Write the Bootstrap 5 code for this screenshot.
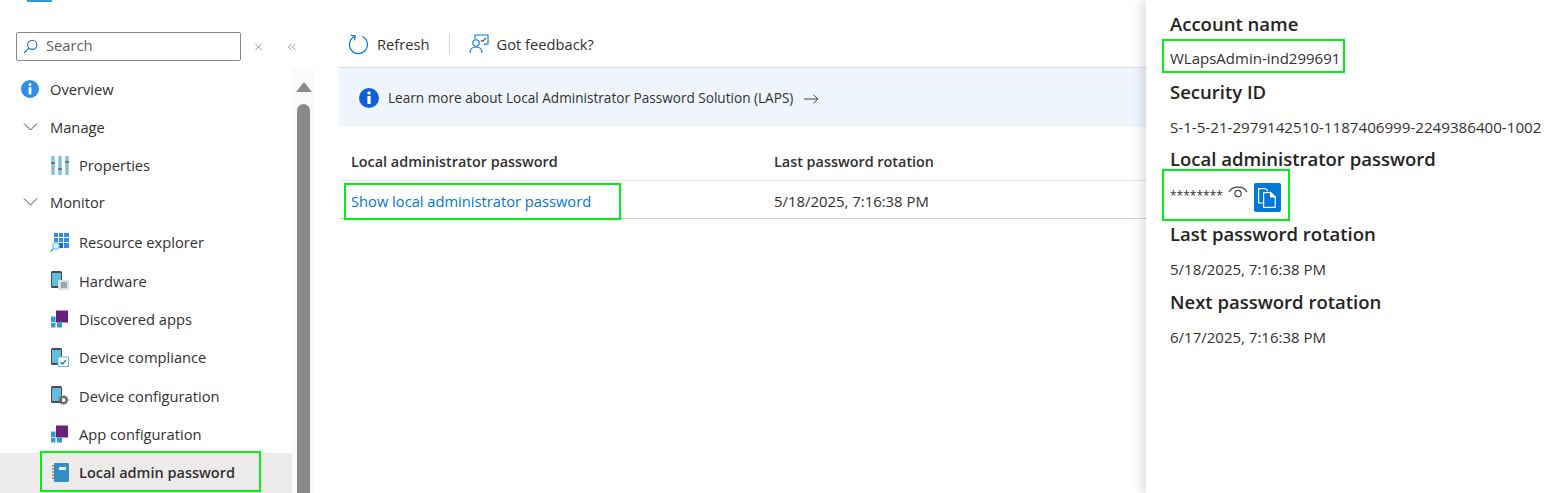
<!DOCTYPE html>
<html lang="en">
  <head>
    <meta charset="UTF-8" />
    <meta name="viewport" content="width=device-width, initial-scale=1.0" />
    <title>Local admin password</title>
    <link
      href="https://cdn.jsdelivr.net/npm/bootstrap@5.3.0/dist/css/bootstrap.min.css"
      rel="stylesheet"
    />
    <style>
      html, body { height: 493px; overflow: hidden; }
      body { font-family: "Open Sans", "Liberation Sans", sans-serif; font-size: 14.7px; color: #323130; background: #fff; }
      .page-wrap { width: 1559px; height: 493px; overflow: hidden; }

      /* sidebar */
      .blade-menu { width: 339px; flex: none; }
      .logo-strip { width: 25px; height: 2px; margin-left: 27px; background: #2f9bd6; }
      .search-row { height: 67px; padding: 30px 0 0 16px; }
      .search-box { width: 225px; height: 29px; border: 1px solid #8a8886; border-radius: 2px; padding-left: 6px; color: #605e5c; }
      .search-box span { padding-bottom: 2px; }
      .tool-glyph { width: 55px; height: 29px; }
      .clear-glyph { margin-left: 14px; }
      .collapse-glyph { margin-left: 26px; }
      .menu-area { width: 315px; height: 426px; }
      .menu-list { width: 292px; padding-top: 1px; }
      .menu-row { height: 38.3px; padding-left: 50px; white-space: nowrap; }
      .menu-row.tight { height: 38px; }
      .menu-row.top { padding-left: 21px; }
      .menu-row.top > svg { margin-right: 11px; }
      .menu-row.sub > svg { margin-right: 10px; }
      .menu-row.pull-up { margin-top: -1px; }
      .menu-row.push-down { margin-top: 2.2px; }
      .menu-row.active { height: 40px; background: #edebe9; font-weight: 600; font-size: 14.5px; }
      .active-mark { align-self: flex-start; margin: -2px 0 0 -10px; padding: 3px 0 0 10px; width: 221px; height: 41px; border: 2px solid #00f018; flex: none; }
      .scroll-rail { width: 23px; background: #fafafa; padding-left: 5px; }
      .scroll-up { width: 0; height: 0; border-left: 8px solid transparent; border-right: 8px solid transparent; border-bottom: 10px solid #8a8a8a; margin: 13px 0 12px -1px; }
      .scroll-thumb { width: 13px; flex: 1; background: #8a8a8a; border-radius: 7px 7px 0 0; }

      /* main */
      .main-area { width: 807px; flex: none; }
      .cmd-bar { height: 68px; padding: 33px 0 0 9px; border-bottom: 1px solid #dcdcdc; }
      .cmd-sep { width: 1px; height: 20px; background: #d6d6d6; margin: 1px 19px 0; }
      .info-banner { height: 59px; background: #eff5fd; padding: 1px 0 0 20px; border-radius: 0 0 3px 3px; font-size: 13.6px; }
      .info-banner > svg:first-child { margin-right: 9px; }
      .banner-arrow { margin: 2px 0 0 10px; }
      .grid-head { height: 54px; padding: 0 0 7px 12px; font-weight: 600; font-size: 14.4px; border-bottom: 1px solid #e6e6e6; }
      .grid-row { height: 38px; padding-left: 12px; border-bottom: 1px solid #d0d0d0; }
      .col-name { width: 423px; flex: none; }
      .grid-row .col-name { align-self: flex-start; }
      .show-link { color: #0078d4; text-decoration: none; font-size: 14.7px; }
      .date-cell { font-size: 14.9px; padding-top: 4px; }
      .mark-box { border: 2px solid #00f018; }
      .link-mark { display: flex; align-items: center; width: 277px; height: 37px; margin: 2px 0 0 -7px; padding: 0 0 1px 5px; background: #fff; position: relative; }

      /* details panel */
      .details-panel { width: 413px; flex: none; height: 493px; padding: 0 0 0 24px; box-shadow: -4px 0 10px rgba(0,0,0,.13); position: relative; background: #fff; font-size: 15px; }
      .detail-title { font-size: 18.5px; font-weight: 600; color: #252423; line-height: 24px; white-space: nowrap; }
      .detail-value { line-height: 20px; white-space: nowrap; }
      .detail-gap { margin-top: 13px; }
      .sid-value { font-size: 15.15px; }
      .name-mark { width: 183px; height: 34px; margin: 3px 0 0 -8px; padding: 7px 0 0 6px; }
      .pass-mark { width: 128px; height: 52px; margin: -2px 0 0 -8px; padding: 12px 0 0 6px; }
      .stars-text { font-size: 12px; margin-top: 4px; }
      .eye-mark { margin: 2px 6px 0 5px; }
      .copy-btn { width: 27px; height: 29px; border-radius: 2px; background: #0078d4; border: 0; padding: 0; }
    </style>
  </head>
  <body>
    <div class="page-wrap d-flex">
      <div class="blade-menu">
        <div class="logo-strip"></div>
        <div class="search-row d-flex">
          <div class="search-box d-flex align-items-center gap-2">
            <svg width="15" height="15" viewBox="0 0 15 15" fill="none" stroke="#0078d4" stroke-width="1.1"><circle cx="9.2" cy="5.8" r="4.6"/><path d="M5.8 9.2 1 14"/></svg>
            <span>Search</span>
          </div>
          <div class="tool-glyph d-flex align-items-center">
            <svg class="clear-glyph" width="10" height="10" viewBox="0 0 10 10" fill="none" stroke="#666" stroke-width=".9"><path d="M.5.5l9 9M9.5.5l-9 9"/></svg>
            <svg class="collapse-glyph" width="11" height="10" viewBox="0 0 11 10" fill="none" stroke="#666" stroke-width=".9"><path d="M5 .5.6 5 5 9.5M10.5.5 6 5l4.5 4.5"/></svg>
          </div>
        </div>
        <div class="menu-area d-flex">
          <div class="menu-list">
            <div class="menu-row tight top d-flex align-items-center">
              <svg width="18" height="18" viewBox="0 0 18 18"><circle cx="9" cy="9" r="9" fill="#2f8fe6"/><circle cx="9" cy="4.6" r="1.5" fill="#fff"/><rect x="7.6" y="7.2" width="2.8" height="7.2" fill="#fff"/></svg>
              Overview
            </div>
            <div class="menu-row tight top d-flex align-items-center">
              <svg width="18" height="10" viewBox="0 0 18 10" fill="none" stroke="#444" stroke-width="1"><path d="M3 1.5 9.5 8 16 1.5"/></svg>
              Manage
            </div>
            <div class="menu-row tight sub d-flex align-items-center">
              <svg width="19" height="19" viewBox="0 0 19 19"><path d="M1 0h4v19H1zM8 0h4v19H8zM15 0h4v19h-4z" fill="#a5d6ea"/><path d="M3 0v19M10 0v19M17 0v19" stroke="#5fa8cc" stroke-width="1"/><path d="M1 7h4M8 13h4M15 6h4" stroke="#777" stroke-width="2"/></svg>
              Properties
            </div>
            <div class="menu-row tight top pull-up d-flex align-items-center">
              <svg width="18" height="10" viewBox="0 0 18 10" fill="none" stroke="#444" stroke-width="1"><path d="M3 1.5 9.5 8 16 1.5"/></svg>
              Monitor
            </div>
            <div class="menu-row sub push-down d-flex align-items-center">
              <svg width="19" height="19" viewBox="0 0 19 19"><path d="M4 0h4v4H4zM9 0h4v4H9zM14 0h5v4h-5zM4 5h4v4H4zM9 5h4v4H9zM14 5h5v4h-5zM14 10h5v5h-5z" fill="#2f8fe6"/><path d="M9 10h4v5H9z" fill="#0f6fd0"/><circle cx="6" cy="13" r="3.4" fill="#d8f3fb" stroke="#50c0e8"/><path d="M3.5 15.5 0.6 18.6" stroke="#3aa0d0" stroke-width="1.2"/></svg>
              Resource explorer
            </div>
            <div class="menu-row sub d-flex align-items-center">
              <svg width="19" height="19" viewBox="0 0 19 19"><rect x="1" y="0" width="11" height="17" rx="1.5" fill="#4a4a4a"/><rect x="2" y="2" width="9" height="13" fill="#63bde0"/><rect x="8" y="9" width="11" height="10" fill="#d7e3ea"/><path d="M11 12h6M11 14h6M11 16h6" stroke="#666"/></svg>
              Hardware
            </div>
            <div class="menu-row sub d-flex align-items-center">
              <svg width="19" height="19" viewBox="0 0 19 19"><rect x="6" y="1.5" width="12" height="12" fill="#68217a"/><path d="M1 7.5h4.5V13H1zM1 13.8h4.5v4.7H1zM7 13.8h5v4.7H7z" fill="#2f9bd6"/></svg>
              Discovered apps
            </div>
            <div class="menu-row sub d-flex align-items-center">
              <svg width="19" height="19" viewBox="0 0 19 19"><rect x="1" y="0" width="11" height="17" rx="1.5" fill="#4a4a4a"/><rect x="2" y="2" width="9" height="13" fill="#63bde0"/><rect x="8" y="9" width="10.5" height="9.5" fill="#fff" stroke="#63bde0"/><path d="m10.5 14 2 2 3.5-4" fill="none" stroke="#0078d4" stroke-width="1.2"/></svg>
              Device compliance
            </div>
            <div class="menu-row sub d-flex align-items-center">
              <svg width="19" height="19" viewBox="0 0 19 19"><rect x="1" y="0" width="11" height="17" rx="1.5" fill="#4a4a4a"/><rect x="2" y="2" width="9" height="13" fill="#63bde0"/><circle cx="13.5" cy="14" r="3" fill="none" stroke="#666" stroke-width="2.2"/><circle cx="13.5" cy="14" r="4.6" fill="none" stroke="#666" stroke-width="1" stroke-dasharray="1.5 1.5"/></svg>
              Device configuration
            </div>
            <div class="menu-row sub d-flex align-items-center">
              <svg width="19" height="19" viewBox="0 0 19 19"><rect x="6" y="1.5" width="12" height="12" fill="#68217a"/><path d="M1 7.5h4.5V13H1zM1 13.8h4.5v4.7H1zM7 13.8h5v4.7H7z" fill="#2f9bd6"/></svg>
              App configuration
            </div>
            <div class="menu-row sub active d-flex align-items-center">
              <div class="active-mark d-flex align-items-center">
                <svg class="me-2" width="19" height="19" viewBox="0 0 19 19"><rect x="2" y="0" width="15" height="19" rx="1" fill="#2f8fc6"/><rect x="7" y="4" width="7" height="3" fill="#fff"/><path d="M0 3h3M0 6h3M0 9h3M0 12h3M0 15h3" stroke="#666"/></svg>
                Local admin password
              </div>
            </div>
          </div>
          <div class="scroll-rail d-flex flex-column">
            <div class="scroll-up"></div>
            <div class="scroll-thumb"></div>
          </div>
        </div>
      </div>

      <div class="main-area">
        <div class="cmd-bar d-flex align-items-start">
          <div class="d-flex align-items-center gap-2">
            <svg width="21" height="21" viewBox="0 0 21 21" fill="none" stroke="#0078d4" stroke-width="1.2"><path d="M7 2.2A9 9 0 1 0 14.5 2.5"/><path d="M2.8 1.4 7.3 2 6.4 6.4"/></svg>
            <span>Refresh</span>
          </div>
          <div class="cmd-sep"></div>
          <div class="d-flex align-items-center gap-2">
            <svg width="20" height="20" viewBox="0 0 20 20" fill="none" stroke="#0078d4" stroke-width="1.1"><path d="M6 5V1h13v9h-3l-1 1"/><circle cx="7" cy="9" r="3.2"/><path d="M1 19c0-4 2.5-6 6-6s6 2 6 6"/><path d="m12 6 1.5 1.5L17 4" stroke="#555"/></svg>
            <span>Got feedback?</span>
          </div>
        </div>
        <div class="info-banner d-flex align-items-center">
          <svg width="20" height="20" viewBox="0 0 20 20"><circle cx="10" cy="10" r="10" fill="#0f62d6"/><circle cx="10" cy="5" r="1.7" fill="#fff"/><rect x="8.4" y="8" width="3.2" height="8" fill="#fff"/></svg>
          <span>Learn more about Local Administrator Password Solution (LAPS)</span>
          <svg class="banner-arrow" width="16" height="10" viewBox="0 0 16 10" fill="none" stroke="#444" stroke-width="1"><path d="M1 5h14M10.5 .8 15 5l-4.5 4.2"/></svg>
        </div>
        <div class="grid-head d-flex align-items-end">
          <div class="col-name">Local administrator password</div>
          <div>Last password rotation</div>
        </div>
        <div class="grid-row d-flex align-items-center">
          <div class="col-name"><div class="mark-box link-mark"><a class="show-link" href="#">Show local administrator password</a></div></div>
          <div class="date-cell">5/18/2025, 7:16:38 PM</div>
        </div>
      </div>

      <div class="details-panel">
        <div class="detail-title" style="margin-top:12px">Account name</div>
        <div class="mark-box name-mark detail-value">WLapsAdmin-ind299691</div>
        <div class="detail-title" style="margin-top:7px">Security ID</div>
        <div class="detail-value detail-gap sid-value">S-1-5-21-2979142510-1187406999-2249386400-1002</div>
        <div class="detail-title" style="margin-top:10px">Local administrator password</div>
        <div class="mark-box pass-mark d-flex align-items-start">
          <span class="stars-text">********</span>
          <svg class="eye-mark" width="20" height="14" viewBox="0 0 20 14" fill="none" stroke="#444" stroke-width="1.2"><path d="M1 7C4 .5 16 .5 19 7"/><circle cx="10" cy="8.5" r="3.2"/></svg>
          <button class="copy-btn d-flex align-items-center justify-content-center" type="button" aria-label="Copy">
            <svg width="18" height="20" viewBox="0 0 18 20" fill="none" stroke="#fff" stroke-width="1.2"><path d="M5 15H.6V.6H7.5L10 3"/><path d="M5.6 4.6h7l4.6 4.4v10.4H5.6z"/><path d="M12.6 4.6V9h4.6z" fill="#fff"/></svg>
          </button>
        </div>
        <div class="detail-title" style="margin-top:1px">Last password rotation</div>
        <div class="detail-value detail-gap">5/18/2025, 7:16:38 PM</div>
        <div class="detail-title" style="margin-top:11px">Next password rotation</div>
        <div class="detail-value detail-gap">6/17/2025, 7:16:38 PM</div>
      </div>
    </div>
    <script src="https://cdn.jsdelivr.net/npm/bootstrap@5.3.0/dist/js/bootstrap.bundle.min.js"></script>
  </body>
</html>
